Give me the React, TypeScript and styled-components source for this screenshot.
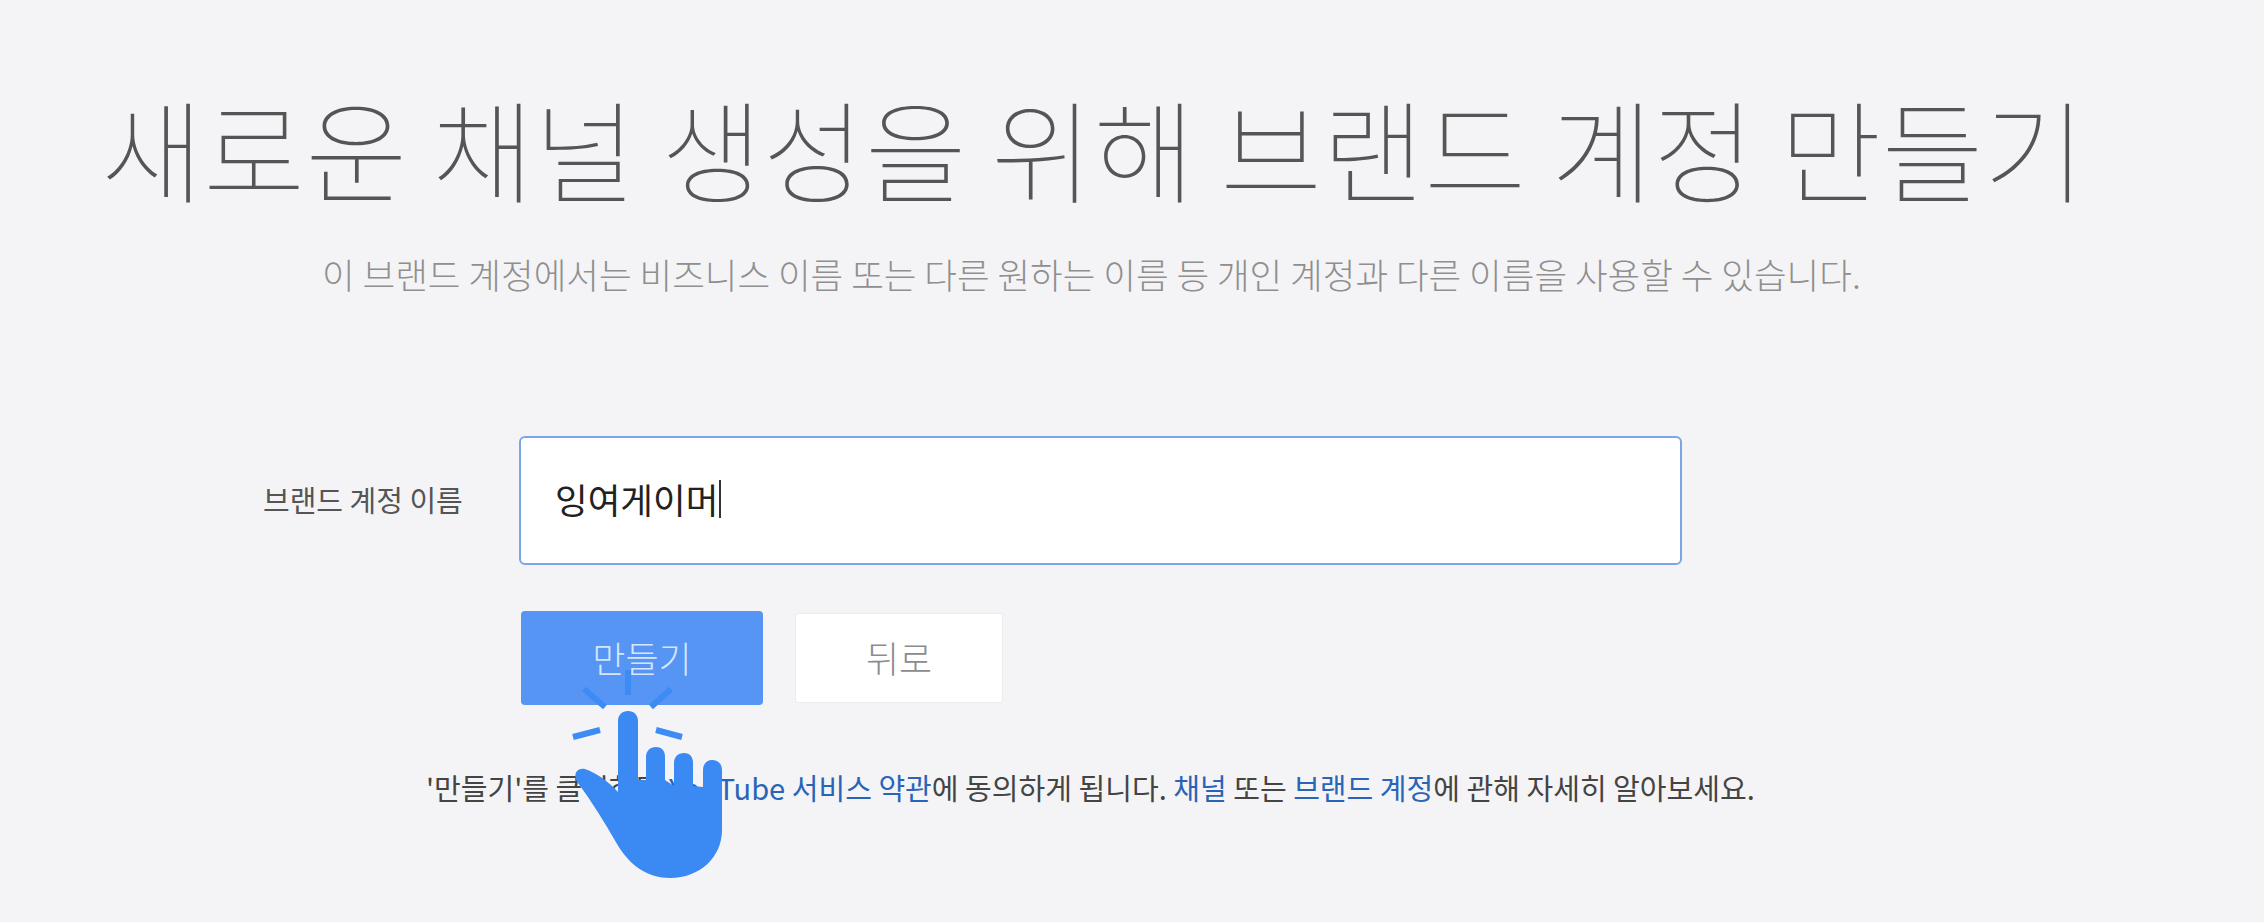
import React from "react";
import styled, { createGlobalStyle } from "styled-components";

const Global = createGlobalStyle`
  html, body { margin: 0; padding: 0; background: #f4f4f6; }
  body { font-family: "Noto Sans CJK KR", "Liberation Sans", sans-serif; }
`;

const Page = styled.main`
  width: 2264px;
  height: 922px;
  overflow: hidden;
  position: relative;
  background: #f4f4f6;
  padding-top: 82px;
  box-sizing: border-box;
`;

const Title = styled.h1`
  margin: 0 0 0 101px;
  font-size: 111px;
  line-height: 130px;
  font-weight: 100;
  color: #555;
  white-space: nowrap;
`;

const Subtitle = styled.p`
  margin: 40px 0 0 322px;
  font-size: 35.5px;
  line-height: 44px;
  font-weight: 300;
  color: #8f8f8f;
  white-space: nowrap;
`;

const FormRow = styled.div`
  display: flex;
  align-items: center;
  margin: 140px 0 0 263px;
`;

const Label = styled.label`
  width: 256px;
  padding-bottom: 3px;
  font-size: 29px;
  font-weight: 400;
  color: #555;
  white-space: nowrap;
`;

const Field = styled.div`
  width: 1163px;
  height: 129px;
  box-sizing: border-box;
  border: 2px solid #7ba6e6;
  border-radius: 6px;
  background: #fff;
  display: flex;
  align-items: center;
  padding: 0 0 4px 34px;
  font-size: 35.5px;
  color: #222;
`;

const Caret = styled.span`
  display: inline-block;
  width: 2px;
  height: 38px;
  margin-left: 1px;
  background: #333;
`;

const Actions = styled.div`
  display: flex;
  align-items: center;
  gap: 32px;
  margin: 46px 0 0 521px;
`;

const Primary = styled.button`
  width: 242px;
  height: 94px;
  padding-bottom: 4px;
  border: 0;
  border-radius: 4px;
  background: #5795f5;
  color: #d6e5fc;
  font: 300 36px "Noto Sans CJK KR", sans-serif;
`;

const Secondary = styled.button`
  width: 208px;
  height: 90px;
  padding-bottom: 4px;
  border: 1px solid #ececee;
  border-radius: 3px;
  background: #fff;
  color: #8c8c8c;
  font: 300 36px "Noto Sans CJK KR", sans-serif;
`;

const Notice = styled.p`
  margin: 64px 0 0 426px;
  font-size: 29.06px;
  line-height: 36px;
  color: #444;
  white-space: nowrap;
`;

const Link = styled.a`
  color: #2a64b8;
`;

const Hand = styled.svg`
  position: absolute;
  left: 400px;
  top: 640px;
  width: 400px;
  height: 282px;
`;

export default function App() {
  return (
    <Page>
      <Global />
      <Title>새로운 채널 생성을 위해 브랜드 계정 만들기</Title>
      <Subtitle>이 브랜드 계정에서는 비즈니스 이름 또는 다른 원하는 이름 등 개인 계정과 다른 이름을 사용할 수 있습니다.</Subtitle>
      <FormRow>
        <Label>브랜드 계정 이름</Label>
        <Field>잉여게이머<Caret /></Field>
      </FormRow>
      <Actions>
        <Primary>만들기</Primary>
        <Secondary>뒤로</Secondary>
      </Actions>
      <Notice>
        '만들기'를 클릭하면 <Link>YouTube 서비스 약관</Link>에 동의하게 됩니다. <Link>채널</Link> 또는 <Link>브랜드 계정</Link>에 관해 자세히 알아보세요.
      </Notice>
      <Hand viewBox="0 0 400 282" fill="none" aria-hidden="true">
        <g stroke="#3d8bf5" strokeWidth="6">
          <path d="M228 30V55" />
          <path d="M184 49L205 67" />
          <path d="M271 49L251 67" />
          <path d="M173 97L200 90" />
          <path d="M256 90L282 97" />
        </g>
        <path
          fill="#3b89f3"
          d="M218 81C218 75 222 71 228 71C234 71 238 75 238 81V140L246 140V117C246 111 250 107 256 107C262 107 265 111 265 117V140L274 146V123C274 117 278 113 284 113C290 113 293 117 293 123V146L303 147V130C303 124 307 120 312 120C318 120 322 124 322 130V190C322 217 300 238 270 238C248 238 230 226 217 204C205 183 192 162 178 143C172 135 177 127 185 129C197 133 209 142 218 152Z"
        />
      </Hand>
    </Page>
  );
}
